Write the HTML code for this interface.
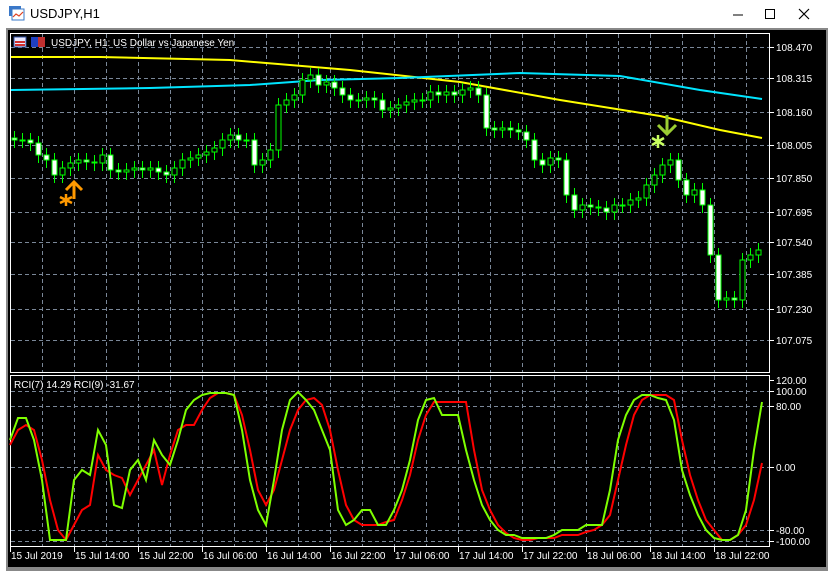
<!DOCTYPE html>
<html><head><meta charset="utf-8"><style>
html,body{margin:0;padding:0;width:832px;height:575px;overflow:hidden;background:#fff;font-family:"Liberation Sans",sans-serif;}
svg text{font-family:"Liberation Sans",sans-serif;font-size:10px;fill:#fff;}
</style></head><body>
<svg width="832" height="575" style="position:absolute;left:0;top:0">
<rect x="0" y="0" width="832" height="575" fill="#fff"/>
<rect x="9" y="6" width="12" height="10" fill="#3a78c8"/><rect x="12" y="9" width="12" height="11" fill="#fff" stroke="#3a78c8"/>
<polyline points="13,17 16,14 19,16 23,12" fill="none" stroke="#e04020" stroke-width="1.2"/>
<text x="30" y="18" style="font-size:13px;fill:#000">USDJPY,H1</text>
<line x1="733" y1="15" x2="743" y2="15" stroke="#000"/>
<rect x="765.5" y="9.5" width="9" height="9" fill="none" stroke="#000"/>
<path d="M799 9 L809 19 M809 9 L799 19" stroke="#000" stroke-width="1.2"/>
<rect x="6" y="28" width="822" height="543" fill="#888"/>
<rect x="8" y="30" width="818" height="537" fill="#000"/>
<g id="grid" stroke="#7a8798" stroke-dasharray="4,3" stroke-width="1"></g>
<rect x="10.5" y="33.5" width="759" height="339" fill="none" stroke="#fff"/>
<rect x="10.5" y="375.5" width="759" height="171" fill="none" stroke="#fff"/>
<g id="axis"></g>
<polyline id="yel" fill="none" stroke="#ffff00" stroke-width="2"/>
<polyline id="cya" fill="none" stroke="#00e5ff" stroke-width="2"/>
<g id="candles"></g>
<path d="M74 199 V182 M66 190 L74 182 L82 190" stroke="#ff9900" stroke-width="3" fill="none"/>
<path d="M66 194 V206 M60 197 L72 203 M60 203 L72 197" stroke="#ff9900" stroke-width="2.5" fill="none"/>
<path d="M667 115 V134 M658 125 L667 134 L676 125" stroke="#9acd32" stroke-width="3" fill="none"/>
<path d="M658 135 V148 M652 138 L664 145 M652 145 L664 138" stroke="#c8ff60" stroke-width="2.5" fill="none"/>
<polyline id="red" fill="none" stroke="#ff0000" stroke-width="2"/>
<polyline id="grn" fill="none" stroke="#7fff00" stroke-width="2"/>
<rect x="14" y="37" width="12" height="10" fill="#e8e8ff" stroke="#3050a0"/><rect x="15" y="41" width="10" height="2" fill="#d03030"/><rect x="15" y="44" width="10" height="2" fill="#d03030"/>
<rect x="31" y="37" width="7" height="10" fill="#2040c0"/><rect x="38" y="37" width="7" height="10" fill="#c03030"/>
<text x="51" y="46">USDJPY, H1:  US Dollar vs Japanese Yen</text>
<text x="14" y="388">RCI(7) 14.29 RCI(9) -31.67</text>
</svg>
<script>
var ns="http://www.w3.org/2000/svg";
function el(t,a,p){var e=document.createElementNS(ns,t);for(var k in a)e.setAttribute(k,a[k]);(p||document.getElementById('axis')).appendChild(e);return e;}
var g=document.getElementById('grid');
for(var x=42;x<770;x+=32){el('line',{x1:x+.5,y1:34,x2:x+.5,y2:372},g);el('line',{x1:x+.5,y1:376,x2:x+.5,y2:546},g);}
var py=[47,78,112,145,178,212,242,274,309,340],pl=["108.470","108.315","108.160","108.005","107.850","107.695","107.540","107.385","107.230","107.075"];
py.forEach(function(y,i){el('line',{x1:11,y1:y+.5,x2:769,y2:y+.5},g);el('line',{x1:770,y1:y+.5,x2:774,y2:y+.5,stroke:'#fff'});var t=el('text',{x:776,y:y+4});t.textContent=pl[i];});
var iy=[[380,"120.00",0],[391,"100.00",1],[406,"80.00",1],[467,"0.00",1],[530,"-80.00",1],[541,"-100.00",1]];
iy.forEach(function(a){if(a[2])el('line',{x1:11,y1:a[0]+.5,x2:769,y2:a[0]+.5},g);el('line',{x1:770,y1:a[0]+.5,x2:774,y2:a[0]+.5,stroke:'#fff'});var t=el('text',{x:776,y:a[0]+4});t.textContent=a[1];});
var dl=["15 Jul 2019","15 Jul 14:00","15 Jul 22:00","16 Jul 06:00","16 Jul 14:00","16 Jul 22:00","17 Jul 06:00","17 Jul 14:00","17 Jul 22:00","18 Jul 06:00","18 Jul 14:00","18 Jul 22:00"];
dl.forEach(function(s,i){var x=10+i*64;el('line',{x1:x+.5,y1:547,x2:x+.5,y2:552,stroke:'#fff'});var t=el('text',{x:x+1,y:559});t.textContent=s;});
function pts(a){var s=[];for(var i=0;i<a.length;i+=2)s.push(a[i]+","+a[i+1]);return s.join(" ");}
document.getElementById('yel').setAttribute('points',pts([11,57,100,57,230,60,350,70,460,82,560,100,660,116,720,130,762,138]));
document.getElementById('cya').setAttribute('points',pts([11,90,150,88,250,85,320,80,400,78,520,73,620,76,700,90,762,99]));
var c=[140,140,143,155,160,175,168,163,160,162,163,155,170,172,170,168,170,168,172,175,168,160,158,155,152,148,140,135,140,140,165,160,150,105,100,95,80,75,85,82,88,95,100,100,98,100,110,108,105,102,100,100,92,95,92,95,90,88,95,128,130,128,130,132,140,160,165,158,160,195,210,205,207,208,212,205,205,200,198,185,175,165,160,180,195,190,205,255,300,298,300,260,255,250];
var cg=document.getElementById('candles'),prev=138;
c.forEach(function(y,i){var x=14+i*8;var o=prev;var top=Math.min(o,y),bot=Math.max(o,y);
el('line',{x1:x+.5,y1:top-7,x2:x+.5,y2:bot+8,stroke:'#00ff00'},cg);
if(bot-top<1)bot=top+1;
if(y<o)el('rect',{x:x-2,y:top,width:5,height:bot-top,fill:'#000',stroke:'#00ff00'},cg);
else el('rect',{x:x-2,y:top,width:5,height:bot-top,fill:'#fff',stroke:'#00ff00'},cg);
prev=y;});
var G=[440,418,418,440,480,540,540,540,480,470,475,430,445,505,508,470,460,480,440,455,465,440,410,400,395,393,393,393,395,430,480,510,525,480,430,400,392,400,410,430,450,510,525,520,510,510,525,525,510,490,460,420,400,398,415,415,415,450,480,505,520,530,535,535,538,538,538,538,535,530,530,530,525,525,525,490,440,415,400,395,395,398,400,420,470,495,515,530,538,540,540,535,510,450,402];
var R=[445,430,425,430,460,500,530,540,525,510,505,455,470,475,478,495,480,465,450,485,455,430,425,425,410,398,393,393,395,415,450,490,505,490,460,430,410,400,398,405,430,470,505,520,525,525,525,522,520,500,475,440,415,402,402,402,402,402,450,490,510,525,533,538,540,540,538,538,538,535,535,535,532,530,525,515,480,445,415,400,395,395,395,400,440,475,500,520,530,540,540,535,525,500,463];
function line(a){var s=[];a.forEach(function(y,i){s.push((10+i*8)+","+y);});return s.join(" ");}
document.getElementById('grn').setAttribute('points',line(G));
document.getElementById('red').setAttribute('points',line(R));
</script>
</body></html>
